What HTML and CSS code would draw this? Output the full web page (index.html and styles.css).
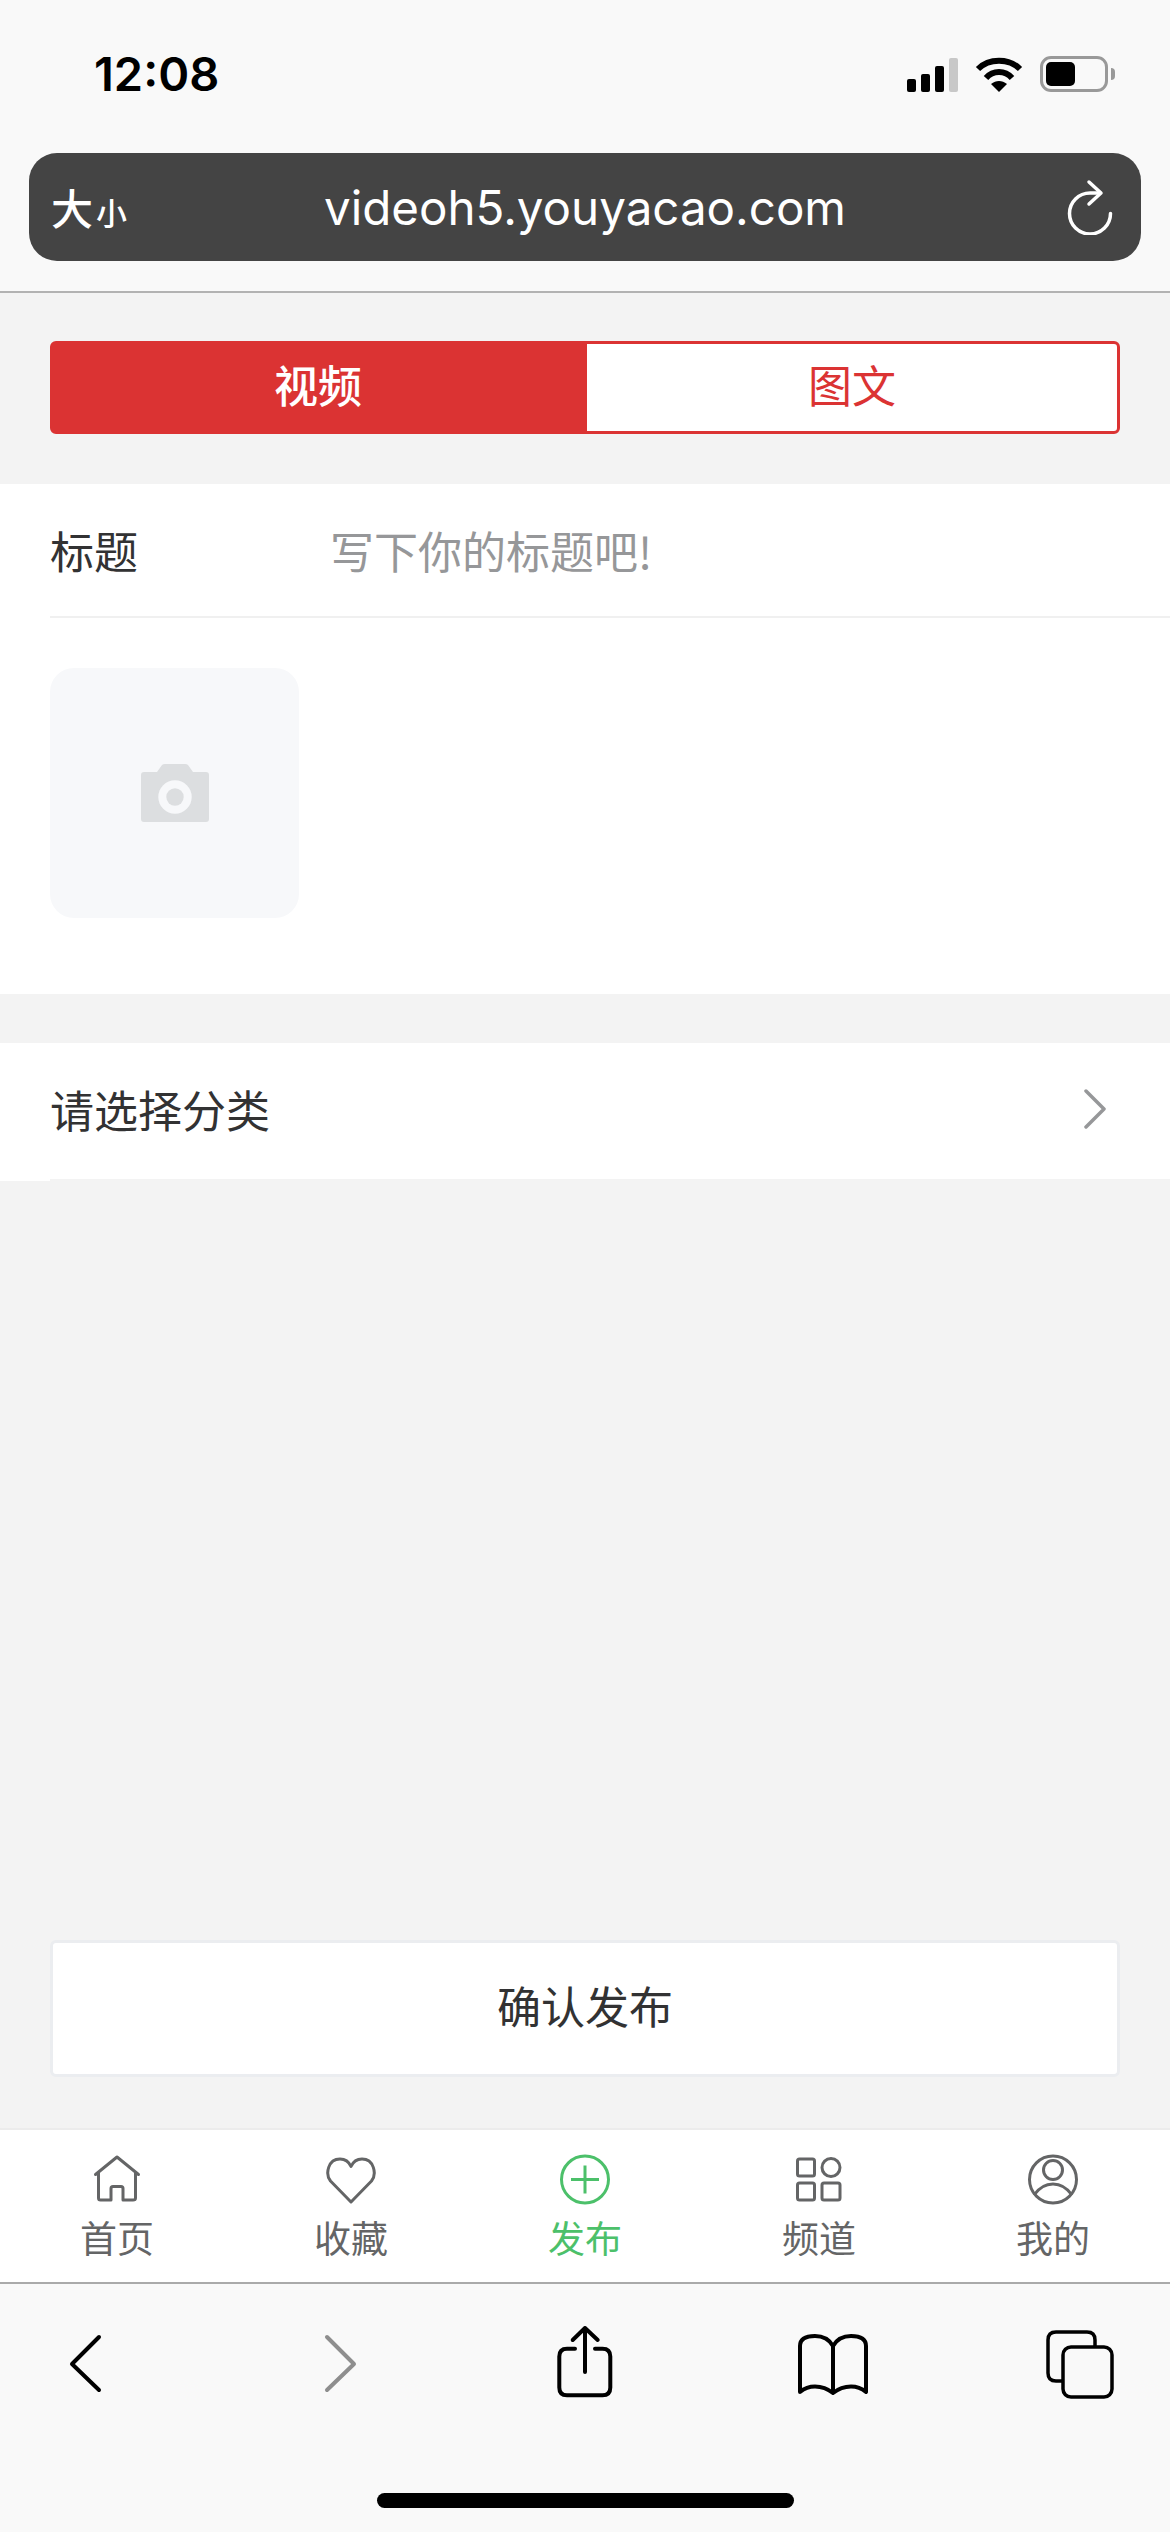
FILE: index.html
```html
<!DOCTYPE html>
<html lang="zh-CN">
<head>
    <meta charset="UTF-8">
    <title>发布</title>
    <link rel="stylesheet" href="styles.css">
</head>
<body>
<div class="page">
    <header class="browser-top">
        <div class="status-bar">
            <span class="clock">12:08</span>
            <div class="status-icons">
                <div class="signal"><i class="b1"></i><i class="b2"></i><i class="b3"></i><i class="b4"></i></div>
                <svg class="wifi" viewBox="0 0 48 36" width="48" height="36">
                    <path d="M3 13C14 2 34 2 45 13" fill="none" stroke="#000" stroke-width="6"/>
                    <path d="M11 22C18 14 30 14 37 22" fill="none" stroke="#000" stroke-width="6"/>
                    <path d="M24 36L16 28C21 24 27 24 32 28Z" fill="#000"/>
                </svg>
                <div class="battery"><div class="battery-level"></div></div>
                <div class="battery-cap"></div>
            </div>
        </div>
        <div class="address-bar">
            <span class="text-size">大<small>小</small></span>
            <span class="url">videoh5.youyacao.com</span>
            <svg class="reload" viewBox="0 0 50 56" width="50" height="56">
                <path d="M24 3L36 14L24 25" fill="none" stroke="#fff" stroke-width="3.500" stroke-linecap="round" stroke-linejoin="round"/>
                <path d="M34 14H25A20.500 20.500 0 1 0 45.500 34.500" fill="none" stroke="#fff" stroke-width="3.500" stroke-linecap="round"/>
            </svg>
        </div>
    </header>

    <main class="content">
        <div class="switch">
            <div class="switch-item active">视频</div>
            <div class="switch-item">图文</div>
        </div>

        <section class="panel">
            <div class="field">
                <label class="field-label" for="title">标题</label>
                <input class="field-input" id="title" type="text" placeholder="写下你的标题吧!">
            </div>
            <div class="uploader-wrap">
                <div class="uploader">
                    <svg viewBox="0 0 68 60" width="68" height="60">
                        <path d="M3 9H16L21 2Q22 1 24 1H44Q46 1 47 2L52 9H65Q68 9 68 12V56Q68 59 65 59H3Q0 59 0 56V12Q0 9 3 9Z" fill="#dcdee0"/>
                        <circle cx="34" cy="34" r="16.700" fill="#f7f8fa"/>
                        <circle cx="34" cy="34" r="8.700" fill="#dcdee0"/>
                    </svg>
                </div>
            </div>
        </section>

        <div class="category">
            <div class="category-row">
                <span>请选择分类</span>
                <svg viewBox="0 0 24 40" width="24" height="40">
                    <path d="M3 2L21 20L3 38" fill="none" stroke="#969799" stroke-width="3.500" stroke-linecap="round" stroke-linejoin="round"/>
                </svg>
            </div>
        </div>

        <button class="submit">确认发布</button>
    </main>

    <nav class="tabbar">
        <div class="tab">
            <svg viewBox="0 0 50 52" width="50" height="52">
                <path d="M3.500 20.500L25 3L46.500 20.500M6.500 18V44Q6.500 46 8.500 46H19V34.500Q19 32.500 21 32.500H29Q31 32.500 31 34.500V46H41Q43.500 46 43.500 44V18" fill="none" stroke="#646566" stroke-width="3" stroke-linecap="round" stroke-linejoin="round"/>
            </svg>
            <span>首页</span>
        </div>
        <div class="tab">
            <svg viewBox="0 0 50 52" width="50" height="52">
                <path d="M25 48L4.500 27C-1 20 2 5 14 5C19 5 23 8 25 12.500C27 8 31 5 36 5C48 5 51 20 45.500 27Z" fill="none" stroke="#646566" stroke-width="3" stroke-linejoin="round"/>
            </svg>
            <span>收藏</span>
        </div>
        <div class="tab active">
            <svg viewBox="0 0 50 52" width="50" height="52">
                <circle cx="25" cy="25.500" r="23.500" fill="none" stroke="#4cc06a" stroke-width="3"/>
                <path d="M11 25.500H39M25 11.500V39.500" fill="none" stroke="#4cc06a" stroke-width="3"/>
            </svg>
            <span>发布</span>
        </div>
        <div class="tab">
            <svg viewBox="0 0 50 52" width="50" height="52">
                <rect x="3.500" y="5" width="17" height="17" rx="2" fill="none" stroke="#646566" stroke-width="3"/>
                <circle cx="37" cy="13.500" r="9" fill="none" stroke="#646566" stroke-width="3"/>
                <rect x="3.500" y="29" width="17" height="17" rx="2" fill="none" stroke="#646566" stroke-width="3"/>
                <rect x="28" y="29" width="18" height="17" rx="2" fill="none" stroke="#646566" stroke-width="3"/>
            </svg>
            <span>频道</span>
        </div>
        <div class="tab">
            <svg viewBox="0 0 50 52" width="50" height="52">
                <circle cx="25" cy="25.500" r="23.500" fill="none" stroke="#646566" stroke-width="3"/>
                <circle cx="25" cy="16" r="9.500" fill="none" stroke="#646566" stroke-width="3"/>
                <path d="M6 41C11 34 17 30 25 30C33 30 39 34 44 41" fill="none" stroke="#646566" stroke-width="3"/>
            </svg>
            <span>我的</span>
        </div>
    </nav>

    <footer class="browser-bottom">
        <div class="toolbar">
            <svg viewBox="0 0 72 84" width="72" height="84">
                <path d="M49 15L22 42L49 68" fill="none" stroke="#000" stroke-width="4" stroke-linecap="round" stroke-linejoin="round"/>
            </svg>
            <svg viewBox="0 0 72 84" width="72" height="84">
                <path d="M28 15L55 42L28 68" fill="none" stroke="#8e8e8e" stroke-width="4" stroke-linecap="round" stroke-linejoin="round"/>
            </svg>
            <svg viewBox="0 0 72 84" width="72" height="84">
                <path d="M28 26.700H20Q12.300 26.700 12.300 34.500V65.500Q12.300 73.300 20 73.300H55.500Q63.300 73.300 63.300 65.500V34.500Q63.300 26.700 55.500 26.700H48" fill="none" stroke="#000" stroke-width="4" stroke-linecap="round"/>
                <path d="M38 50V6M25.700 18L38 6L50.700 18" fill="none" stroke="#000" stroke-width="4" stroke-linecap="round" stroke-linejoin="round"/>
            </svg>
            <svg viewBox="0 0 72 84" width="72" height="84">
                <path d="M37 24C33 17 27 14 19 14C10 14 4 17 4 24V70C10 65 14 64.500 19 64.500C26 64.500 32 67 37 71C42 67 48 64.500 55 64.500C60 64.500 64 65 70 70V24C70 17 64 14 55 14C47 14 41 17 37 24ZM37 24V71" fill="none" stroke="#000" stroke-width="4" stroke-linejoin="round"/>
            </svg>
            <svg viewBox="0 0 72 84" width="72" height="84">
                <path d="M51 24V18Q51 10 43 10H12Q4 10 4 18V51Q4 59 12 59H18" fill="none" stroke="#000" stroke-width="3.500"/>
                <rect x="19" y="25" width="49" height="50" rx="8" fill="none" stroke="#000" stroke-width="3.500"/>
            </svg>
        </div>
        <div class="home-indicator"></div>
    </footer>
</div>
</body>
</html>
```

FILE: styles.css
```css
* {
    box-sizing: border-box;
}
body {
    margin: 0;
    font-family: "Noto Sans CJK SC", sans-serif;
    color: #323233;
    background: #f3f3f3;
}
.page {
    display: flex;
    flex-direction: column;
    height: 2532px;
    overflow: hidden;
}

/* safari chrome, top */
.browser-top {
    height: 293px;
    background: #f9f9f9;
    border-bottom: 2px solid #b2b2b2;
}
.status-bar {
    display: flex;
    justify-content: space-between;
    height: 153px;
    padding: 56px 55px 0 94px;
}
.clock {
    font-family: Inter, sans-serif;
    font-size: 47px;
    font-weight: 600;
    line-height: 36px;
    color: #000;
}
.status-icons {
    display: flex;
    align-items: flex-end;
    height: 36px;
}
.signal {
    display: flex;
    align-items: flex-end;
    gap: 5px;
    margin-right: 17px;
}
.signal i {
    display: block;
    width: 9px;
    border-radius: 2px;
    background: #000;
}
.signal .b1 { height: 13px; }
.signal .b2 { height: 18px; }
.signal .b3 { height: 26px; }
.signal .b4 { height: 34px; background: #c8c8c8; }
.wifi {
    margin-right: 17px;
}
.battery {
    width: 68px;
    height: 36px;
    padding: 3px;
    border: 3px solid #999;
    border-radius: 11px;
}
.battery-level {
    width: 29px;
    height: 100%;
    border-radius: 5px;
    background: #000;
}
.battery-cap {
    width: 4px;
    height: 12px;
    margin: 0 0 12px 3px;
    border-radius: 0 4px 4px 0;
    background: #999;
}
.address-bar {
    display: grid;
    grid-template-columns: 1fr auto 1fr;
    align-items: center;
    height: 108px;
    margin: 0 29px;
    padding: 0 26px;
    border-radius: 28px;
    background: #444;
    color: #fff;
}
.text-size {
    margin-left: -4px;
    font-size: 42px;
    font-weight: 500;
    line-height: 1;
}
.text-size small {
    margin-left: 3px;
    font-size: 31px;
}
.url {
    font-family: Inter, sans-serif;
    font-size: 47.500px;
    font-weight: 400;
}
.reload {
    justify-self: end;
}

/* page content */
.content {
    flex: 1;
    display: flex;
    flex-direction: column;
    padding-top: 48px;
}
.switch {
    display: flex;
    height: 93px;
    margin: 0 50px 50px;
    border: 3px solid #db3333;
    border-radius: 6px;
    background: #fff;
    font-size: 44px;
    color: #db3333;
}
.switch-item {
    flex: 1;
    display: flex;
    align-items: center;
    justify-content: center;
    padding-bottom: 7px;
}
.switch-item.active {
    flex: 0 0 534px;
    padding-right: 4px;
    background: #db3333;
    color: #fff;
    font-weight: 500;
}
.panel {
    height: 510px;
    background: #fff;
}
.field {
    display: flex;
    align-items: center;
    height: 134px;
    margin-left: 50px;
    border-bottom: 2px solid #f0f0f0;
}
.field-label {
    width: 280px;
    font-size: 44px;
}
.field-input {
    flex: 1;
    border: none;
    outline: none;
    padding: 0;
    font-family: inherit;
    font-size: 44px;
}
.field-input::placeholder {
    color: #969799;
}
.uploader-wrap {
    padding: 50px;
}
.uploader {
    display: flex;
    align-items: center;
    justify-content: center;
    width: 249px;
    height: 250px;
    border-radius: 24px;
    background: #f7f8fa;
}
.category {
    height: 138px;
    margin-top: 49px;
    padding-left: 50px;
    background: #fff;
    font-size: 44px;
}
.category-row {
    display: flex;
    align-items: center;
    justify-content: space-between;
    height: 100%;
    padding: 0 63px 5px 0;
    border-bottom: 2px solid #f3f3f3;
}
.submit {
    height: 137px;
    margin: auto 50px 51px;
    padding: 0 0 8px;
    border: 3px solid #ebedf0;
    border-radius: 6px;
    background: #fff;
    font-family: inherit;
    font-size: 44px;
    color: #323233;
}

/* bottom nav */
.tabbar {
    display: flex;
    height: 154px;
    padding-top: 24px;
    border-top: 2px solid #ececec;
    background: #fff;
}
.tab {
    flex: 1;
    display: flex;
    flex-direction: column;
    align-items: center;
    font-size: 37px;
    line-height: 50px;
    color: #646566;
}
.tab svg {
    margin-bottom: 6px;
}
.tab.active {
    color: #4cc06a;
}

/* safari chrome, bottom */
.browser-bottom {
    height: 250px;
    background: #f9f9f9;
    border-top: 2px solid #aaa;
}
.toolbar {
    display: flex;
    justify-content: space-between;
    padding: 38px 54px 0 50px;
}
.home-indicator {
    width: 417px;
    height: 15px;
    margin: 87px auto 0;
    border-radius: 8px;
    background: #000;
}
```
